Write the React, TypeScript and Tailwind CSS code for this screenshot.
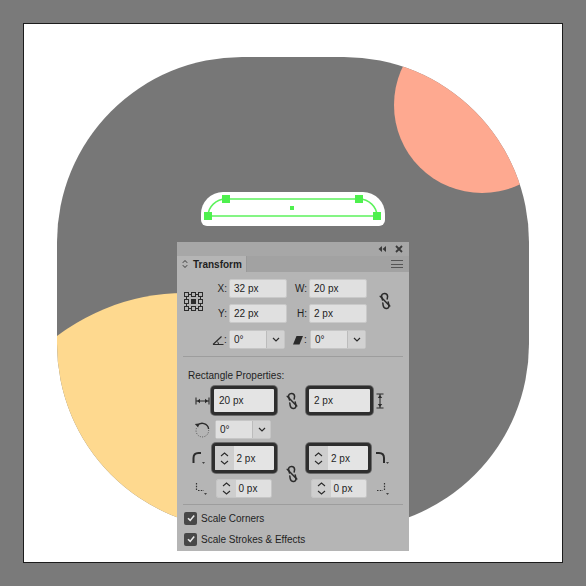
import React from 'react';

const ink = '#2b2b2b';

const Chevron = () => (
  <svg width="8" height="5" viewBox="0 0 8 5">
    <path d="M1 1 L4 4 L7 1" stroke={ink} strokeWidth="1.2" fill="none" />
  </svg>
);

const Spinner = () => (
  <div className="flex h-full w-[19px] flex-col items-center justify-center gap-[3px] bg-[#cecece]">
    <svg width="9" height="5" viewBox="0 0 9 5">
      <path d="M1 4 L4.5 1 L8 4" stroke={ink} strokeWidth="1.1" fill="none" />
    </svg>
    <svg width="9" height="5" viewBox="0 0 9 5">
      <path d="M1 1 L4.5 4 L8 1" stroke={ink} strokeWidth="1.1" fill="none" />
    </svg>
  </div>
);

const Field: React.FC<{ value: string; className?: string }> = ({ value, className = '' }) => (
  <div
    className={`flex h-[19px] items-center rounded-[2px] border border-[#c9c9c9] bg-[#e0e0e0] pl-[4px] text-[10px] text-[#222] ${className}`}
  >
    {value}
  </div>
);

const Combo: React.FC<{ value: string; className?: string }> = ({ value, className = '' }) => (
  <div className={`flex h-[19px] rounded-[2px] border border-[#c6c6c6] ${className}`}>
    <div className="flex flex-1 items-center bg-[#e0e0e0] pl-[4px] text-[10px] text-[#222]">{value}</div>
    <div className="flex w-[18px] items-center justify-center border-l border-[#bcbcbc] bg-[#d2d2d2]">
      <Chevron />
    </div>
  </div>
);

const SpinField: React.FC<{ value: string; className?: string }> = ({ value, className = '' }) => (
  <div className={`flex h-[19px] overflow-hidden rounded-[2px] border border-[#c6c6c6] ${className}`}>
    <Spinner />
    <div className="flex flex-1 items-center bg-[#e0e0e0] pl-[3px] text-[10px] text-[#222]">{value}</div>
  </div>
);

const Thick: React.FC<{ children: React.ReactNode; className?: string }> = ({ children, className = '' }) => (
  <div
    className={`flex overflow-hidden rounded-[4px] border-[3px] border-[#2e2e2e] bg-[#e4e4e4] shadow-[0_0_0_1px_#6a6a6a] ${className}`}
  >
    {children}
  </div>
);

const BrokenLink = () => (
  <svg width="12" height="18" viewBox="0 0 12 18">
    <g stroke={ink} strokeWidth="1.5" fill="none" strokeLinecap="round">
      <path d="M3.5 8 L2.8 5 Q2.2 1.6 5.4 1.4 Q8.4 1.3 8.6 4.4 L8.2 7" />
      <path d="M3.8 11 L4.2 13.6 Q4.8 16.6 7.8 16.4 Q10.4 16 9.8 12.8 L9.2 10" />
      <path d="M1.2 4.2 L10.8 14" />
    </g>
  </svg>
);

const RefGrid = () => (
  <svg width="19" height="19" viewBox="0 0 19 19">
    {[0, 7, 14].map((y) =>
      [0, 7, 14].map((x) => (
        <rect
          key={`${x}-${y}`}
          x={x + 0.5}
          y={y + 0.5}
          width="4"
          height="4"
          fill={x === 7 && y === 7 ? ink : 'none'}
          stroke={ink}
          strokeWidth="1"
        />
      ))
    )}
    <path d="M5 2.5 H7 M12 2.5 H14 M5 16.5 H7 M12 16.5 H14 M2.5 5 V7 M2.5 12 V14 M16.5 5 V7 M16.5 12 V14" stroke={ink} />
  </svg>
);

const Check = () => (
  <div className="flex h-[13px] w-[13px] items-center justify-center rounded-[2px] bg-[#474747]">
    <svg width="10" height="10" viewBox="0 0 10 10">
      <path d="M2 5.2 L4.2 7.4 L8.2 2.6" stroke="#e8e8e8" strokeWidth="1.6" fill="none" />
    </svg>
  </div>
);

const App: React.FC = () => {
  return (
    <div className="relative h-[586px] w-[586px] bg-[#7a7a7a] p-[23px] font-['Liberation_Sans',Arial,sans-serif]">
      <div className="relative h-full w-full overflow-hidden border border-[#1c1c1c] bg-white">
        <div className="absolute left-[33px] top-[33px] h-[472px] w-[472px] overflow-hidden rounded-[185px] bg-[#777777]">
          <div className="absolute left-[337px] top-[-40px] h-[176px] w-[176px] rounded-full bg-[#fea990]" />
          <div className="absolute left-[-84px] top-[236px] h-[424px] w-[424px] rounded-full bg-[#fed98f]" />
          <div className="absolute left-[144px] top-[135px] h-[34px] w-[184px] rounded-t-[22px] rounded-b-[6px] bg-white" />
        </div>
      </div>

      {/* selection */}
      <svg className="pointer-events-none absolute left-0 top-0" width="586" height="586">
        <path
          d="M208 216 C208 207 216 199 226 199 L359 199 C369 199 377 207 377 216 Z"
          stroke="#5cf25c"
          strokeWidth="1.5"
          fill="none"
        />
        {[
          [226, 199],
          [359, 199],
          [208, 216],
          [377, 216],
        ].map(([x, y]) => (
          <rect key={`${x}-${y}`} x={x - 4} y={y - 4} width="8" height="8" fill="#4ef04e" />
        ))}
        <rect x="290" y="206" width="4" height="4" fill="#4ef04e" />
      </svg>

      {/* Transform panel */}
      <div className="absolute left-[177px] top-[242px] flex h-[309px] w-[232px] flex-col bg-[#b5b5b5] text-[#1f1f1f]">
        <div className="flex h-[14px] items-center justify-end gap-[9px] bg-[#a7a7a7] pr-[6px]">
          <svg width="8" height="6" viewBox="0 0 8 6">
            <path d="M4 0 L0.5 3 L4 6 Z M8 0 L4.5 3 L8 6 Z" fill="#3a3a3a" />
          </svg>
          <svg width="8" height="8" viewBox="0 0 8 8">
            <path d="M1 1 L7 7 M7 1 L1 7" stroke="#3a3a3a" strokeWidth="1.8" />
          </svg>
        </div>
        <div className="flex h-[16px] items-stretch justify-between bg-[#a2a2a2]">
          <div className="flex w-[70px] items-center gap-[5px] border-r border-[#9a9a9a] bg-[#b5b5b5] pl-[5px] text-[10px] font-bold">
            <svg width="6" height="10" viewBox="0 0 6 10">
              <path d="M0.8 3.8 L3 1.5 L5.2 3.8 M0.8 6.2 L3 8.5 L5.2 6.2" stroke="#3a3a3a" strokeWidth="1" fill="none" />
            </svg>
            Transform
          </div>
          <div className="flex flex-col justify-center gap-[2.5px] pr-[6px]">
            <div className="h-px w-[12px] bg-[#555]" />
            <div className="h-px w-[12px] bg-[#555]" />
            <div className="h-px w-[12px] bg-[#555]" />
          </div>
        </div>

        <div className="flex flex-col px-[6px] pt-[7px]">
          <div className="flex">
            <div className="flex w-[20px] items-center justify-center">
              <RefGrid />
            </div>
            <div className="flex flex-col gap-[6px]">
              {[
                ['X:', '32 px', 'W:', '20 px'],
                ['Y:', '22 px', 'H:', '2 px'],
              ].map(([a, av, b, bv]) => (
                <div key={a} className="flex h-[19px] items-center text-[10px]">
                  <div className="w-[26px] pr-[2px] text-right">{a}</div>
                  <Field value={av} className="w-[58px]" />
                  <div className="w-[22px] pr-[2px] text-right">{b}</div>
                  <Field value={bv} className="w-[58px]" />
                </div>
              ))}
            </div>
            <div className="flex flex-1 items-center justify-center">
              <BrokenLink />
            </div>
          </div>

          <div className="mt-[7px] flex h-[19px] items-center text-[10px]">
            <div className="w-[29px]" />
            <svg width="12" height="10" viewBox="0 0 12 10">
              <path d="M1 9.5 H11.5 M1 9.5 L9.5 1.5" stroke={ink} strokeWidth="1.1" fill="none" />
              <path d="M6.5 9.5 A3.5 3.5 0 0 0 5.2 6.5" stroke={ink} strokeWidth="1" fill="none" />
            </svg>
            <div className="w-[5px]">:</div>
            <Combo value="0°" className="w-[56px]" />
            <div className="w-[8px]" />
            <svg width="10" height="10" viewBox="0 0 10 10">
              <path d="M3.5 1 H10 L6.5 9.5 H0 Z" fill={ink} />
            </svg>
            <div className="w-[7px] pl-[1px]">:</div>
            <Combo value="0°" className="w-[56px]" />
          </div>

          <div className="mt-[7px] h-px bg-[#9d9d9d]" />

          <div className="mt-[12px] pl-[5px] text-[10px] leading-[13px]">Rectangle Properties:</div>

          <div className="mt-[4px] flex h-[29px] items-center text-[10px]">
            <div className="w-[12px]" />
            <svg width="15" height="8" viewBox="0 0 15 8">
              <path d="M1 0.5 V7.5 M14 0.5 V7.5 M1.5 4 H13.5" stroke={ink} strokeWidth="1.1" />
              <path d="M2 4 L5 1.8 V6.2 Z M13 4 L10 1.8 V6.2 Z" fill={ink} />
            </svg>
            <div className="w-[1px]" />
            <Thick className="h-[29px] w-[66px]">
              <div className="flex flex-1 items-center pl-[5px]">20 px</div>
            </Thick>
            <div className="flex w-[29px] items-center justify-center">
              <BrokenLink />
            </div>
            <Thick className="h-[29px] w-[67px]">
              <div className="flex flex-1 items-center pl-[5px]">2 px</div>
            </Thick>
            <div className="w-[3px]" />
            <svg width="8" height="16" viewBox="0 0 8 16">
              <path d="M0.5 1 H7.5 M0.5 15 H7.5 M4 1.5 V14.5" stroke={ink} strokeWidth="1.1" />
              <path d="M4 2 L1.8 5 H6.2 Z M4 14 L1.8 11 H6.2 Z" fill={ink} />
            </svg>
          </div>

          <div className="mt-[4px] flex h-[20px] items-center text-[10px]">
            <div className="w-[11px]" />
            <svg width="17" height="17" viewBox="0 0 17 17">
              <path d="M3.2 5 A6.3 6.3 0 0 1 14.6 8" stroke={ink} strokeWidth="1.4" fill="none" />
              <path d="M0.8 3 L4.8 2.4 L4.2 6.6 Z" fill={ink} />
              <path d="M14.6 9 A6.3 6.3 0 1 1 2.6 7" stroke="#555" strokeWidth="1" strokeDasharray="1 1.4" fill="none" />
            </svg>
            <div className="w-[4px]" />
            <Combo value="0°" className="w-[56px]" />
          </div>

          <div className="mt-[4px] flex text-[10px]">
            <div className="flex w-[94px] flex-col gap-[6px]">
              <div className="flex h-[30px] items-center">
                <div className="w-[9px]" />
                <svg width="13" height="14" viewBox="0 0 13 14">
                  <path d="M1.5 12 V7 Q1.5 2 6.5 2 H9" stroke={ink} strokeWidth="2" fill="none" />
                  <path d="M10 11 H13 L11.5 13 Z" fill="#444" />
                </svg>
                <div className="w-[6.5px]" />
                <Thick className="h-[30px] w-[65px]">
                  <Spinner />
                  <div className="flex flex-1 items-center pl-[3px]">2 px</div>
                </Thick>
              </div>
              <div className="flex h-[19px] items-center">
                <div className="w-[12px]" />
                <svg width="12" height="12" viewBox="0 0 12 12">
                  <path d="M1.5 0 V8" stroke="#333" strokeWidth="1.2" strokeDasharray="1.5 1.3" />
                  <path d="M3 7.5 H9" stroke="#333" strokeWidth="1.2" strokeDasharray="1.5 1.3" />
                  <path d="M9 10 H12 L10.5 12 Z" fill="#444" />
                </svg>
                <div className="w-[8.5px]" />
                <SpinField value="0 px" className="w-[56px]" />
              </div>
            </div>
            <div className="flex w-[29px] items-center justify-center pt-[6px]">
              <BrokenLink />
            </div>
            <div className="flex flex-col gap-[6px]">
              <div className="flex h-[30px] items-center">
                <Thick className="h-[30px] w-[65px]">
                  <Spinner />
                  <div className="flex flex-1 items-center pl-[3px]">2 px</div>
                </Thick>
                <div className="w-[5px]" />
                <svg width="13" height="14" viewBox="0 0 13 14">
                  <path d="M0 2 H3 Q8 2 8 7 V12" stroke={ink} strokeWidth="2" fill="none" />
                  <path d="M10 11 H13 L11.5 13 Z" fill="#444" />
                </svg>
              </div>
              <div className="flex h-[19px] items-center">
                <div className="w-[4.5px]" />
                <SpinField value="0 px" className="w-[56px]" />
                <div className="w-[9px]" />
                <svg width="13" height="12" viewBox="0 0 13 12">
                  <path d="M8.5 0 V8" stroke="#333" strokeWidth="1.2" strokeDasharray="1.5 1.3" />
                  <path d="M1 7.5 H7" stroke="#333" strokeWidth="1.2" strokeDasharray="1.5 1.3" />
                  <path d="M10 10 H13 L11.5 12 Z" fill="#444" />
                </svg>
              </div>
            </div>
          </div>

          <div className="mt-[6px] h-px bg-[#9d9d9d]" />

          <div className="mt-[6px] flex flex-col gap-[7px] pl-[1px] text-[10px]">
            <div className="flex h-[14px] items-center gap-[4px]">
              <Check />
              <span>Scale Corners</span>
            </div>
            <div className="flex h-[14px] items-center gap-[4px]">
              <Check />
              <span>Scale Strokes &amp; Effects</span>
            </div>
          </div>
        </div>
      </div>
    </div>
  );
};

export default App;
